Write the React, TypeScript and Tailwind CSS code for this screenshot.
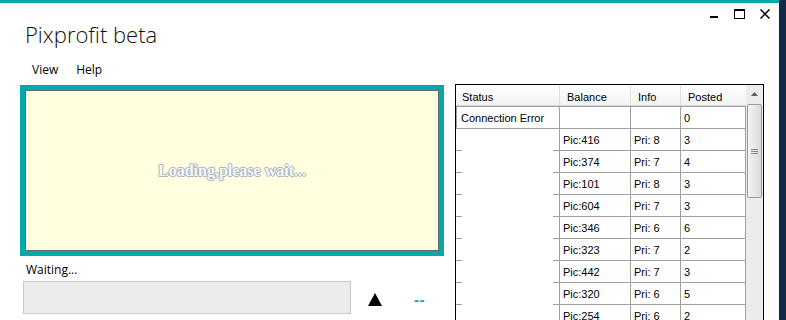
const rows = [
  { bal: 'Pic:416', info: 'Pri: 8', posted: '3' },
  { bal: 'Pic:374', info: 'Pri: 7', posted: '4' },
  { bal: 'Pic:101', info: 'Pri: 8', posted: '3' },
  { bal: 'Pic:604', info: 'Pri: 7', posted: '3' },
  { bal: 'Pic:346', info: 'Pri: 6', posted: '6' },
  { bal: 'Pic:323', info: 'Pri: 7', posted: '2' },
  { bal: 'Pic:442', info: 'Pri: 7', posted: '3' },
  { bal: 'Pic:320', info: 'Pri: 6', posted: '5' },
  { bal: 'Pic:254', info: 'Pri: 6', posted: '2' },
]

function WindowControls() {
  return (
    <div className="mt-[6px] mr-[9px] flex items-start">
      <svg width="8" height="10" viewBox="0 0 8 10">
        <rect x="0" y="7" width="8" height="2" fill="#000" />
      </svg>
      <svg className="ml-[16px]" width="11" height="10" viewBox="0 0 11 10">
        <rect x="0.5" y="0.5" width="10" height="9" fill="none" stroke="#000" />
        <rect x="0" y="0" width="11" height="2" fill="#000" />
      </svg>
      <svg className="ml-[15px]" width="10" height="10" viewBox="0 0 10 10">
        <path d="M0.5 0.5 L9.5 9.5 M9.5 0.5 L0.5 9.5" stroke="#000" strokeWidth="1.5" />
      </svg>
    </div>
  )
}

function Scrollbar() {
  return (
    <div className="flex w-[17px] flex-col bg-[#ececec]">
      <div className="flex h-[17px] shrink-0 items-center justify-center">
        <svg width="7" height="4" viewBox="0 0 7 4">
          <path d="M0 4 L3.5 0 L7 4 Z" fill="#606060" />
        </svg>
      </div>
      <div className="mx-[1px] mt-[2px] flex h-[94px] shrink-0 flex-col items-center justify-center gap-[1px] rounded-[2px] border border-[#9a9a9a] bg-linear-to-r from-[#f4f4f4] to-[#dadada]">
        <div className="h-px w-[7px] bg-[#8a8a8a]" />
        <div className="h-px w-[7px] bg-[#8a8a8a]" />
        <div className="h-px w-[7px] bg-[#8a8a8a]" />
      </div>
    </div>
  )
}

function Grid() {
  return (
    <div className="flex border border-black bg-white font-['Liberation_Sans',Arial,sans-serif] text-[11px] text-black">
      <div className="flex w-[290px] flex-col">
        <div className="flex h-[21px] shrink-0 items-start border-b border-[#d8d8d8] bg-linear-to-b from-white to-[#f3f3f3] leading-[24px]">
          <div className="h-full w-[104px] border-r border-[#e2e2e2] pl-[6px]">Status</div>
          <div className="h-full w-[71px] border-r border-[#e2e2e2] pl-[7px]">Balance</div>
          <div className="h-full w-[50px] border-r border-[#e2e2e2] pl-[7px]">Info</div>
          <div className="h-full w-[65px] pl-[7px]">Posted</div>
        </div>
        <div className="flex h-[23px] shrink-0 border-y border-[#a0a0a0] leading-[23px]">
          <div className="w-[104px] border-x border-[#a0a0a0] pl-[4px]">Connection Error</div>
          <div className="w-[71px] border-r border-[#a0a0a0]" />
          <div className="w-[50px] border-r border-[#a0a0a0]" />
          <div className="w-[65px] border-r border-[#a0a0a0] pl-[3px]">0</div>
        </div>
        {rows.map((r) => (
          <div key={r.bal} className="flex h-[22px] shrink-0 leading-[23px]">
            <div className="flex w-[104px] flex-col border-r border-[#a0a0a0]">
              <div className="flex-1" />
              <div className="flex justify-between">
                <div className="h-px w-[6px] bg-[#a0a0a0]" />
                <div className="h-px w-[6px] bg-[#a0a0a0]" />
              </div>
            </div>
            <div className="h-[22px] w-[71px] overflow-hidden border-r border-b border-[#a0a0a0] pl-[3px]">{r.bal}</div>
            <div className="h-[22px] w-[50px] overflow-hidden border-r border-b border-[#a0a0a0] pl-[3px]">{r.info}</div>
            <div className="h-[22px] w-[65px] overflow-hidden border-r border-b border-[#a0a0a0] pl-[3px]">{r.posted}</div>
          </div>
        ))}
      </div>
      <Scrollbar />
    </div>
  )
}

export default function App() {
  return (
    <div className="flex h-[320px] w-[786px] overflow-hidden bg-white font-['Open_Sans','Noto_Sans',sans-serif] text-black">
      <div className="flex flex-1 flex-col">
        <div className="h-[3px] shrink-0 bg-[#00a9a9]" />
        <div className="flex h-[59px] shrink-0 justify-between">
          <div className="pl-[25px] pt-[16px] text-[22px] leading-[30px] font-light text-[#111]">Pixprofit beta</div>
          <WindowControls />
        </div>
        <div className="flex h-[22px] shrink-0 gap-[18px] pl-[32px] text-[12px] leading-[16px]">
          <span>View</span>
          <span>Help</span>
        </div>
        <div className="flex shrink-0 items-start">
          <div className="mt-[1px] ml-[20px] flex w-[424px] flex-col">
            <div className="h-[171px] shrink-0 border-[5px] border-[#00a9a9]">
              <div className="flex h-full items-center justify-center border border-[#6a6a6a] bg-[#ffffe0]">
                <span className="font-['Liberation_Serif',serif] text-[16px] font-bold text-[#f8f8f2] [text-shadow:1px_0_#a6b3c6,-1px_0_#a6b3c6,0_1px_#a6b3c6,0_-1px_#a6b3c6]">
                  Loading,please wait...
                </span>
              </div>
            </div>
            <div className="mt-[6px] pl-[6px] text-[12px] leading-[16px]">Waiting...</div>
            <div className="mt-[3px] flex items-center">
              <div className="ml-[3px] h-[33px] w-[328px] border border-[#c8c8c8] bg-[#ececec]" />
              <svg className="mt-[3px] ml-[17px]" width="14" height="13" viewBox="0 0 14 13">
                <path d="M7 0 L14 13 L0 13 Z" fill="#000" />
              </svg>
              <span className="mt-[4px] ml-[32px] font-['Liberation_Sans',sans-serif] text-[15px] leading-[10px] font-bold tracking-[0.5px] text-[#00a9a9]">--</span>
            </div>
          </div>
          <div className="ml-[11px]">
            <Grid />
          </div>
        </div>
      </div>
      <div className="w-[7px] shrink-0 bg-[#14284a]" />
    </div>
  )
}
